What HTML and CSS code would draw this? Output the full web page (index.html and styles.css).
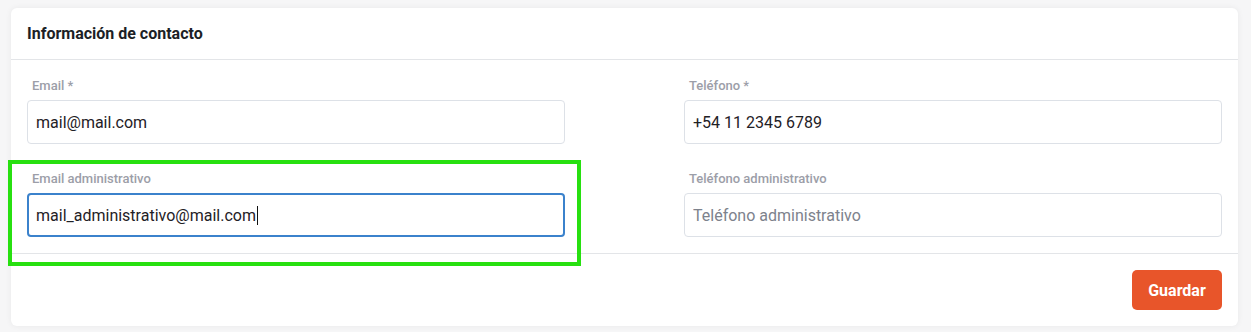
FILE: index.html
```html
<!DOCTYPE html>
<html lang="es">
<head>
    <meta charset="UTF-8">
    <meta name="viewport" content="width=device-width, initial-scale=1.0">
    <title>Información de contacto</title>
    <link rel="stylesheet" href="styles.css">
</head>
<body>
    <div class="card">
        <div class="card-header">
            <h2>Información de contacto</h2>
        </div>

        <div class="card-body">
            <div class="field">
                <label>Email *</label>
                <input type="text" class="input" value="mail@mail.com">
            </div>
            <div class="field">
                <label>Teléfono *</label>
                <input type="text" class="input" value="+54 11 2345 6789">
            </div>
            <div class="field highlighted">
                <label>Email administrativo</label>
                <div class="input focused">mail_administrativo@mail.com<span class="caret"></span></div>
            </div>
            <div class="field">
                <label>Teléfono administrativo</label>
                <input type="text" class="input" placeholder="Teléfono administrativo">
            </div>
        </div>

        <div class="card-footer">
            <button class="btn">Guardar</button>
        </div>
    </div>
</body>
</html>
```

FILE: styles.css
```css
body {
    font-family: Roboto, 'Liberation Sans', sans-serif;
    background-color: #f6f6f7;
    color: #222;
    margin: 0;
    padding: 8px 13px 6px 11px;
}
.card {
    position: relative;
    background: #fff;
    border-radius: 6px;
    box-shadow: 0 0 6px rgba(0, 0, 0, 0.06);
}
.card-header {
    height: 52px;
    display: flex;
    align-items: center;
    padding: 0 16px;
    border-bottom: 1px solid #e3e5e8;
    box-sizing: border-box;
}
.card-header h2 {
    margin: 0;
    font-size: 16px;
    font-weight: 700;
    color: #1c1f26;
}
.card-body {
    display: grid;
    grid-template-columns: 1fr 1fr;
    column-gap: 119px;
    row-gap: 27px;
    padding: 18px 16px 16px;
    border-bottom: 1px solid #e3e5e8;
}
/* Recuadro verde de resaltado */
.highlighted::after {
    content: '';
    position: absolute;
    left: -19px;
    top: -11px;
    width: 565px;
    height: 98px;
    border: 4px solid #27e010;
    pointer-events: none;
}
.field {
    position: relative;
    display: flex;
    flex-direction: column;
}
.field label {
    font-size: 13px;
    font-weight: 500;
    color: #9c9ea8;
    margin: 0 0 6px 5px;
    line-height: 16px;
}
.input {
    height: 44px;
    box-sizing: border-box;
    border: 1px solid #dde1e7;
    border-radius: 4px;
    padding: 0 8px;
    font-family: inherit;
    font-size: 16px;
    color: #1f2126;
    display: flex;
    align-items: center;
    outline: none;
}
.input::placeholder {
    color: #7d828c;
}
.input.focused {
    border: 2px solid #3b82cc;
    padding: 0 7px;
}
.caret {
    display: inline-block;
    width: 1px;
    height: 19px;
    background: #111;
    margin-left: 1px;
}
.card-footer {
    display: flex;
    justify-content: flex-end;
    padding: 16px;
}
.btn {
    width: 90px;
    height: 40px;
    background-color: #e8552a;
    color: #fff;
    border: none;
    border-radius: 5px;
    font-family: inherit;
    font-size: 16px;
    font-weight: 700;
    cursor: pointer;
}
```
